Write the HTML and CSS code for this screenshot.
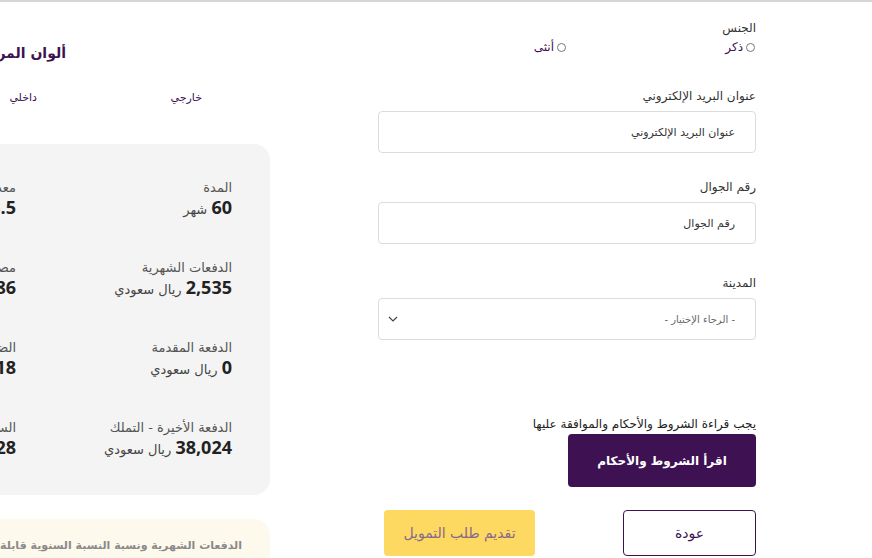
FILE: index.html
```html
<!DOCTYPE html>
<html lang="ar" dir="rtl">
  <head>
    <meta charset="UTF-8" />
    <meta name="viewport" content="width=device-width, initial-scale=1.0" />
    <title>طلب التمويل</title>
    <link rel="stylesheet" href="styles.css">
  </head>
  <body>
    <div class="page">
      <div class="layout">
        <!-- نموذج البيانات -->
        <form class="apply-form" onsubmit="return false">
          <div class="field field-gender">
            <div class="field-label">الجنس</div>
            <div class="radio-row">
              <label class="radio-option"><input type="radio" name="gender" value="m" /> ذكر</label>
              <label class="radio-option"><input type="radio" name="gender" value="f" /> أنثى</label>
            </div>
          </div>

          <div class="field field-email">
            <label class="field-label" for="email">عنوان البريد الإلكتروني</label>
            <input class="text-input" id="email" type="text" placeholder="عنوان البريد الإلكتروني" />
          </div>

          <div class="field field-phone">
            <label class="field-label" for="phone">رقم الجوال</label>
            <input class="text-input" id="phone" type="text" placeholder="رقم الجوال" />
          </div>

          <div class="field field-city">
            <label class="field-label" for="city">المدينة</label>
            <div class="select-box">
              <select id="city">
                <option>- الرجاء الإختيار -</option>
              </select>
              <svg class="chevron" width="10" height="6" viewBox="0 0 10 6"><path d="M1 1l4 4 4-4" fill="none" stroke="#444" stroke-width="1.2" /></svg>
            </div>
          </div>

          <div class="terms">
            <p class="terms-note">يجب قراءة الشروط والأحكام والموافقة عليها</p>
            <button type="button" class="btn btn-terms">اقرأ الشروط والأحكام</button>
          </div>

          <div class="actions">
            <button type="button" class="btn btn-back">عودة</button>
            <button type="button" class="btn btn-submit">تقديم طلب التمويل</button>
          </div>
        </form>

        <!-- ملخص التمويل -->
        <div class="summary">
          <div class="colors">
            <h3 class="colors-title">ألوان المركبة</h3>
            <div class="color-tabs">
              <span>خارجي</span>
              <span>داخلي</span>
            </div>
          </div>

          <div class="summary-card">
            <div class="summary-item">
              <div class="item-label">المدة</div>
              <div class="item-value"><b>60</b> شهر</div>
            </div>
            <div class="summary-item">
              <div class="item-label">معدل النسبة السنوي</div>
              <div class="item-value"><b>3.5</b> %</div>
            </div>
            <div class="summary-item">
              <div class="item-label">الدفعات الشهرية</div>
              <div class="item-value"><b>2,535</b> ريال سعودي</div>
            </div>
            <div class="summary-item">
              <div class="item-label">مصاريف إدارية</div>
              <div class="item-value"><b>1,086</b></div>
            </div>
            <div class="summary-item">
              <div class="item-label">الدفعة المقدمة</div>
              <div class="item-value"><b>0</b> ريال سعودي</div>
            </div>
            <div class="summary-item">
              <div class="item-label">الضريبة</div>
              <div class="item-value"><b>3,218</b></div>
            </div>
            <div class="summary-item">
              <div class="item-label">الدفعة الأخيرة - التملك</div>
              <div class="item-value"><b>38,024</b> ريال سعودي</div>
            </div>
            <div class="summary-item">
              <div class="item-label">السعر الإجمالي</div>
              <div class="item-value"><b>190,128</b></div>
            </div>
          </div>

          <div class="summary-note">الدفعات الشهرية ونسبة النسبة السنوية قابلة للتغيير حسب الجهة التمويلية</div>
        </div>
      </div>
    </div>
  </body>
</html>
```

FILE: styles.css
```css
* {
  margin: 0;
  padding: 0;
  box-sizing: border-box;
}

body {
  font-family: "DejaVu Sans", "Noto Sans", sans-serif;
  background: white;
  color: #333;
  direction: rtl;
}

.page {
  border-top: 2px solid #d6d6d6;
  height: 558px;
  overflow: hidden;
}

.layout {
  display: flex;
  gap: 108px;
  padding-right: 116px;
  overflow: hidden;
}

/* ---------- form ---------- */

.apply-form {
  flex: 0 0 378px;
  padding-top: 17px;
}

.field-label {
  display: block;
  font-size: 12px;
  line-height: 18px;
  color: #333;
  margin-bottom: 6px;
}

.field-gender .field-label {
  margin-bottom: 1px;
}

.radio-row {
  display: grid;
  grid-template-columns: 1fr 1fr;
}

.radio-option {
  display: flex;
  align-items: center;
  gap: 3px;
  font-size: 12px;
  line-height: 18px;
  color: #3d1152;
}

.radio-option input {
  width: 9px;
  height: 9px;
  margin: 0 1px 0 0;
}

.field-email {
  margin-top: 31px;
}

.field-phone {
  margin-top: 25px;
}

.field-city {
  margin-top: 30px;
}

.text-input,
.select-box select {
  width: 100%;
  height: 42px;
  border: 1px solid #dcdcdc;
  border-radius: 4px;
  padding: 0 20px;
  font-family: inherit;
  font-size: 11px;
  color: #333;
  background: white;
  outline: none;
}

.text-input::placeholder {
  color: #333;
}

.select-box {
  position: relative;
}

.select-box select {
  appearance: none;
  font-size: 10px;
  color: #666;
}

.chevron {
  position: absolute;
  left: 10px;
  top: 18px;
}

.terms {
  margin-top: 75px;
}

.terms-note {
  font-size: 12px;
  line-height: 18px;
  color: #222;
}

.btn {
  font-family: inherit;
  border-radius: 4px;
  cursor: pointer;
}

.btn-terms {
  display: block;
  width: 188px;
  height: 53px;
  margin-top: 1px;
  background: #3d1152;
  border: none;
  color: white;
  font-size: 12px;
  font-weight: bold;
}

.actions {
  display: flex;
  justify-content: space-between;
  margin-top: 23px;
}

.btn-back {
  width: 133px;
  height: 46px;
  background: white;
  border: 1px solid #3d1152;
  color: #3d1152;
  font-size: 14px;
}

.btn-submit {
  width: 151px;
  height: 46px;
  margin-left: 6px;
  background: #fdd962;
  border: none;
  color: #86698c;
  font-size: 14px;
}

/* ---------- summary ---------- */

.summary {
  flex: 0 0 460px;
}

.colors-title {
  padding-right: 204px;
  margin-top: 41px;
  font-size: 14px;
  line-height: 20px;
  color: #3d1152;
  white-space: nowrap;
}

.color-tabs {
  display: grid;
  grid-template-columns: 165px 165px;
  padding-right: 68px;
  margin-top: 27px;
  font-size: 11px;
  line-height: 16px;
  color: #3d1152;
}

.summary-card {
  display: grid;
  grid-template-columns: 216px 216px;
  grid-auto-rows: 42px;
  row-gap: 38px;
  margin-top: 38px;
  padding: 35px 38px 39px 0;
  background: #f4f4f4;
  border-radius: 16px;
  height: 351px;
}

.item-label {
  font-size: 13px;
  line-height: 18px;
  color: #555;
  white-space: nowrap;
}

.item-value {
  font-size: 13px;
  line-height: 20px;
  color: #444;
  white-space: nowrap;
}

.item-value b {
  font-family: "Open Sans", "DejaVu Sans", sans-serif;
  font-size: 18px;
  font-weight: 700;
  color: #222;
}

.summary-note {
  margin-top: 24px;
  padding: 20px 28px;
  background: #fdf9ec;
  border-radius: 16px;
  font-size: 11px;
  font-weight: bold;
  color: #8a8a8a;
  white-space: nowrap;
}
```
